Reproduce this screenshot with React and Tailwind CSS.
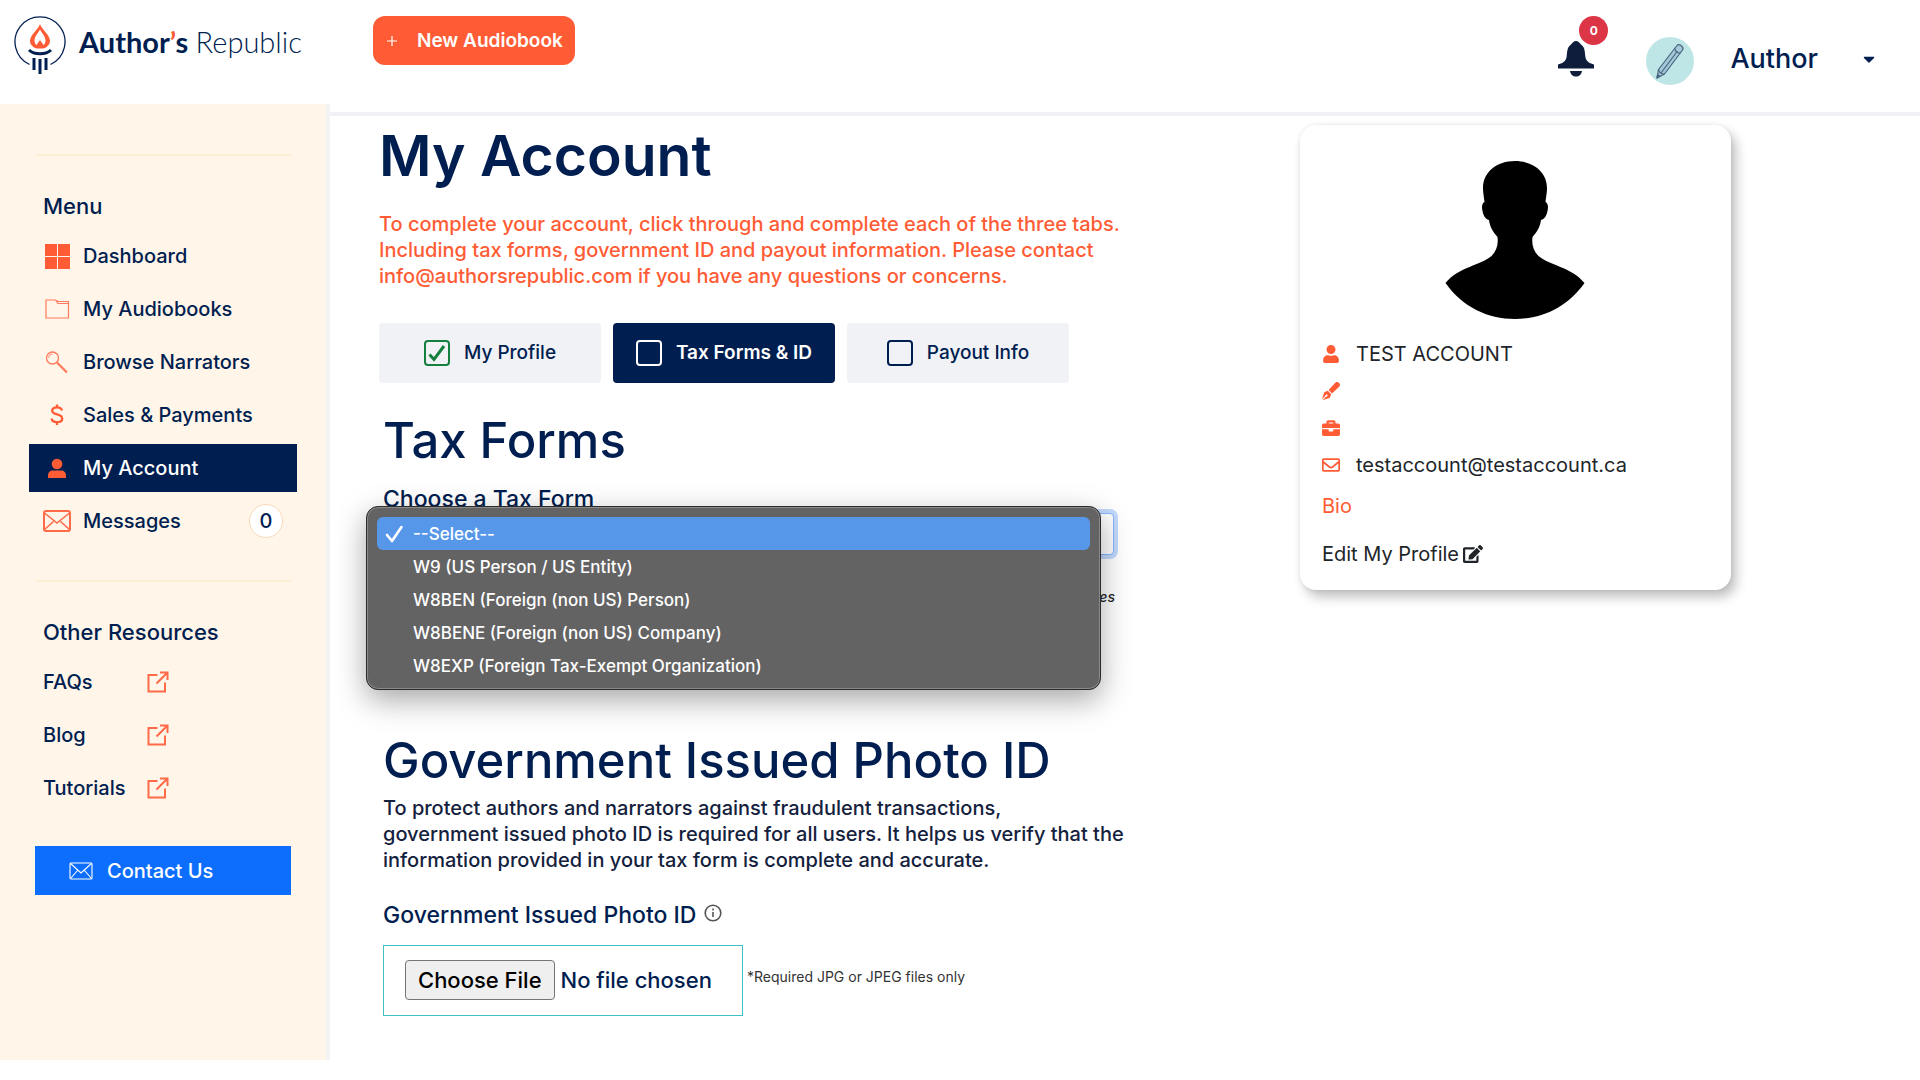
import { FaUser, FaPenFancy, FaBriefcase, FaRegEnvelope, FaEdit, FaCaretDown } from "react-icons/fa";

const menu = [
  { label: "Dashboard", icon: DashboardIcon },
  { label: "My Audiobooks", icon: FolderIcon },
  { label: "Browse Narrators", icon: SearchIcon },
  { label: "Sales & Payments", icon: DollarIcon },
  { label: "My Account", icon: PersonIcon, active: true },
  { label: "Messages", icon: MailIcon, count: 0 },
];

const resources = ["FAQs", "Blog", "Tutorials"];

const tabs = [
  { label: "My Profile", done: true },
  { label: "Tax Forms & ID", active: true },
  { label: "Payout Info" },
];

const taxForms = [
  "--Select--",
  "W9 (US Person / US Entity)",
  "W8BEN (Foreign (non US) Person)",
  "W8BENE (Foreign (non US) Company)",
  "W8EXP (Foreign Tax-Exempt Organization)",
];

function DashboardIcon() {
  return (
    <svg width="28" height="28" viewBox="0 0 28 28" fill="#ff5c35">
      <path d="M2 2h12v12H2zM15 2h12v12H15zM2 15h12v12H2zM15 15h12v12H15z" />
    </svg>
  );
}

function FolderIcon() {
  return (
    <svg width="28" height="28" viewBox="0 0 28 28" fill="none" stroke="#ff7a5c" strokeWidth="1.200">
      <path d="M3 5h9.500l2.500 1.500h10.500V23H3zM12.500 5l2.500 3.500h10.500" />
    </svg>
  );
}

function SearchIcon() {
  return (
    <svg width="28" height="28" viewBox="0 0 28 28" fill="none" stroke="#ff7a5c" strokeWidth="1.300">
      <circle cx="9.500" cy="10" r="6" />
      <path d="M5.500 10a4 4 0 0 1 4-4" strokeWidth="0.800" />
      <path d="M14 14.500l10 10" strokeWidth="2.200" />
    </svg>
  );
}

function DollarIcon() {
  return (
    <svg width="28" height="28" viewBox="0 0 28 28" fill="none" stroke="#ff5c35" strokeWidth="2.300">
      <path d="M19 9.500c-.5-2-2.200-3.200-5-3.200-3 0-4.800 1.300-4.800 3.500 0 5 10 2.300 10 7.700 0 2.300-2 3.700-5.200 3.700-3 0-5-1.300-5.400-3.700M14 3.500v3M14 21v3" />
    </svg>
  );
}

function PersonIcon() {
  return (
    <svg width="28" height="28" viewBox="0 0 28 28" fill="#ff5c35">
      <circle cx="14" cy="10" r="5.300" />
      <path d="M5 24v-2.500c0-3 2-5 5-5h8c3 0 5 2 5 5V24z" />
    </svg>
  );
}

function MailIcon() {
  return (
    <svg width="28" height="28" viewBox="0 0 28 28" fill="none" stroke="#ff6b48" strokeWidth="2">
      <rect x="1" y="4" width="26" height="20" rx="2" />
      <path d="M1.500 6L14 16 26.500 6M1.500 22.500l9-8M26.500 22.500l-9-8" strokeWidth="1.600" />
    </svg>
  );
}

function ExternalIcon() {
  return (
    <svg width="22" height="22" viewBox="0 0 22 22" fill="none" stroke="#ff6b48" strokeWidth="2">
      <path d="M10.500 4H1.500v16.500h16.500V11.500M9.500 12.500L20 2M13 1.500h7.500V9" />
    </svg>
  );
}

function Logo() {
  return (
    <svg width="52" height="60" viewBox="0 0 52 60" fill="none">
      <path d="M15.500 48.500a25 25 0 1 1 21 0" stroke="#001e50" strokeWidth="1.300" />
      <path
        fillRule="evenodd"
        d="M26 8c1.500 5 10 11 10 17 0 4-4 7-7 7.500h-6c-3-.5-7-3.500-7-7.500 0-6 8.500-12 10-17zM26 13.500c-1.500 3-5.500 7-5.500 11 0 2 .8 3.500 2 4.500l3.500-5 3.500 5c1.200-1 2-2.500 2-4.500 0-4-4-8-5.500-11z"
        fill="#ff5c35"
      />
      <path d="M15 34c5 5 17 5 22 0" stroke="#001e50" strokeWidth="3" />
      <path d="M20 42v12M26 43v15M32 42v12" stroke="#001e50" strokeWidth="3" />
    </svg>
  );
}

function BellIcon() {
  return (
    <svg width="38" height="38" viewBox="0 0 38 38" fill="#0f1d3d">
      <path d="M1 28.500v-4c4-1 7.500-3 8.500-7 .8-5 .2-10 4.500-13C15.500 3 16.500 1 19 1s3.500 2 5 3.500c4.300 3 3.700 8 4.500 13 1 4 4.500 6 8.500 7v4z" />
      <path d="M13 31h12c-.8 4-3 5.500-6 5.500S13.800 35 13 31z" />
    </svg>
  );
}

function PencilAvatar() {
  return (
    <svg width="48" height="48" viewBox="0 0 48 48" fill="none">
      <circle cx="24" cy="24" r="24" fill="#bfe6e6" />
      <g stroke="#4a6480" strokeWidth="1.200" strokeLinejoin="round">
        <path d="M11 41l1.500-8.500L31 8.500c2-2.500 7.500 1.500 5.500 4.500L18.500 37z" fill="#a3c9d8" />
        <path d="M29 11.500c0 3 3 5 5.500 4.500M12.500 32.500c.5 3 3 5 6 4.500M31.500 14L15 36" />
        <path d="M11 41l.6-3.500 2.200 1.700z" fill="#2f4a6b" />
      </g>
    </svg>
  );
}

function Silhouette() {
  return (
    <svg width="140" height="158" viewBox="0 0 140 158" fill="#000" className="mx-auto">
      <path d="M70 0c18 0 32 11 32 27 0 5-1 9-1.500 14 2.500 1 3 5 2 9-.8 4-2.500 8-6.500 9-1 7-4 12-8.500 17-1 8 1 14 6 19 10 9 33 11 46 27-17 24-42 36-69.500 36S17.500 146 .5 122c13-16 36-18 46-27 5-5 7-11 6-19-4.500-5-7.500-10-8.500-17-4-1-5.700-5-6.500-9-1-4-.5-8 2-9C39 36 38 32 38 27 38 11 52 0 70 0z" />
    </svg>
  );
}

function Sidebar() {
  return (
    <aside className="w-[330px] shrink-0 flex flex-col">
      <a href="#" className="flex items-start gap-[13px] h-[104px] pt-4 pl-[14px]">
        <Logo />
        <span className="font-['Lato'] text-[29px] leading-[52px] text-[#001e50] whitespace-nowrap">
          <b className="font-bold">
            Author<span className="text-[#ff5c35]">’</span>s
          </b>{" "}
          <span className="font-light">Republic</span>
        </span>
      </a>

      <nav className="flex-1 bg-[#fff5e9] border-r-4 border-[#f3f3f5] px-[29px] pt-[50px]">
        <hr className="mx-[6px] border-t-2 border-[#fdeed6]" />
        <h2 className="mt-9 mb-3 ml-[14px] text-[22px] leading-7">Menu</h2>
        <ul className="flex flex-col gap-[5px]">
          {menu.map((item) => (
            <li key={item.label}>
              <a
                href="#"
                className={`flex items-center h-12 pl-[14px] text-xl ${
                  item.active ? "bg-[#001e50] text-white" : ""
                }`}
              >
                <item.icon />
                <span className="ml-3">{item.label}</span>
                {item.count !== undefined && (
                  <span className="ml-auto mr-[14px] size-[34px] rounded-full bg-white border border-[#fbd9b8] flex items-center justify-center">
                    {item.count}
                  </span>
                )}
              </a>
            </li>
          ))}
        </ul>

        <hr className="mx-[6px] mt-[35px] border-t-2 border-[#fdeed6]" />
        <h2 className="mt-9 mb-3 ml-[14px] text-[22px] leading-7">Other Resources</h2>
        <ul className="flex flex-col gap-[5px]">
          {resources.map((label) => (
            <li key={label}>
              <a href="#" className="flex items-center h-12 pl-[14px] text-xl">
                <span className="w-[104px]">{label}</span>
                <ExternalIcon />
              </a>
            </li>
          ))}
        </ul>

        <button className="flex items-center gap-[14px] w-[256px] h-[49px] mt-[34px] mx-[6px] pl-[34px] bg-[#0d6efd] text-white text-xl">
          <svg width="24" height="18" viewBox="0 0 24 18" fill="none" stroke="#fff" strokeWidth="1.100">
            <rect x="1" y="1" width="22" height="16" rx="1" />
            <path d="M1.500 1.500L12 11 22.500 1.500M1.500 16.500l7-8M22.500 16.500l-7-8" />
          </svg>
          Contact Us
        </button>
      </nav>
    </aside>
  );
}

function TopBar() {
  return (
    <header className="flex items-start justify-between h-[116px] border-b-4 border-[#f1f2f6] pl-[43px] pr-[42px]">
      <button className="mt-4 flex items-center h-[49px] w-[202px] rounded-xl bg-[#ff5c35] text-white text-[19px] leading-7 font-semibold whitespace-nowrap">
        <svg width="10" height="10" viewBox="0 0 10 10" stroke="#fff" strokeWidth="1.200" className="ml-[14px] mr-5">
          <path d="M5 0v10M0 5h10" />
        </svg>
        New Audiobook
      </button>

      <div className="flex items-center h-[48px] mt-[37px]">
        <button aria-label="Notifications" className="relative mb-1">
          <BellIcon />
          <span className="absolute -top-6 left-[22px] size-[29px] rounded-full bg-[#dc3545] text-white text-xs font-bold flex items-center justify-center">
            0
          </span>
        </button>
        <span className="ml-[51px]">
          <PencilAvatar />
        </span>
        <button className="ml-9 mb-1 flex items-center gap-[42px] text-[27px] leading-9">
          Author
          <FaCaretDown size={18} />
        </button>
      </div>
    </header>
  );
}

function Tabs() {
  return (
    <div className="flex gap-3 mt-[34px]">
      {tabs.map((tab) => (
        <button
          key={tab.label}
          className={`flex items-center justify-center gap-[14px] w-[222px] h-[60px] rounded text-[19px] leading-7 whitespace-nowrap ${
            tab.active ? "bg-[#001e50] text-white font-semibold" : "bg-[#f1f2f6]"
          }`}
        >
          <svg
            width="26"
            height="26"
            viewBox="0 0 26 26"
            fill="none"
            stroke={tab.done ? "#15803d" : "currentColor"}
            strokeWidth="2"
          >
            <rect x="1" y="1" width="24" height="24" rx="3" />
            {tab.done && <path d="M5.500 14.500l4.500 5L20 6" strokeWidth="3" />}
          </svg>
          {tab.label}
        </button>
      ))}
    </div>
  );
}

function TaxFormSelect() {
  return (
    <div className="relative">
      <label htmlFor="tax-form" className="block mt-[18px] text-[23px] leading-7">
        Choose a Tax Form
      </label>
      <select
        id="tax-form"
        className="block w-[731px] h-[42px] rounded bg-white border border-[#86b7fe] ring-4 ring-[#c2d9fd] appearance-none px-3 text-lg"
      >
        {taxForms.map((form) => (
          <option key={form}>{form}</option>
        ))}
      </select>
      <p className="w-[732px] mt-8 text-right text-sm leading-5 italic text-[#212529]">es</p>

      {/* Open option list */}
      <ul
        role="listbox"
        aria-label="Tax forms"
        className="absolute -left-[17px] top-[21px] w-[735px] h-[184px] p-[10px] rounded-xl bg-[#636363] border border-[#2b2b2b] inset-ring inset-ring-[#8a8a8a] shadow-[0_10px_30px_rgba(0,0,0,0.35)] text-white text-[17px] leading-6"
      >
        {taxForms.map((form, i) => (
          <li
            key={form}
            role="option"
            aria-selected={i === 0}
            className={`flex items-center h-[33px] rounded-md ${i === 0 ? "bg-[#5797ea]" : ""}`}
          >
            <span className="w-[36px] pl-2">
              {i === 0 && (
                <svg width="19" height="18" viewBox="0 0 19 18" fill="none" stroke="#fff" strokeWidth="2.600" strokeLinecap="round" strokeLinejoin="round">
                  <path d="M2 10l5 6L16.500 2" />
                </svg>
              )}
            </span>
            {form}
          </li>
        ))}
      </ul>
    </div>
  );
}

function ProfileCard() {
  const rows = [
    { icon: FaUser, text: "TEST ACCOUNT" },
    { icon: FaPenFancy },
    { icon: FaBriefcase },
    { icon: FaRegEnvelope, text: "testaccount@testaccount.ca" },
  ];
  return (
    <section className="w-[431px] h-[465px] shrink-0 mt-[9px] pt-9 pl-[22px] pr-6 rounded-2xl bg-white text-[#212529] text-xl font-normal shadow-[5px_7px_12px_rgba(0,0,0,0.25),0_0_4px_rgba(0,0,0,0.08)]">
      <Silhouette />
      <ul className="mt-4">
        {rows.map((row, i) => (
          <li key={i} className="flex items-center h-[37px]">
            <span className="w-[34px] text-[#ff5c35]">
              <row.icon size={18} />
            </span>
            {row.text}
          </li>
        ))}
      </ul>
      <p className="mt-[9px] leading-7 text-[#ff5c35]">Bio</p>
      <a href="#" className="mt-5 flex items-center gap-1 leading-7">
        Edit My Profile <FaEdit size={20} />
      </a>
    </section>
  );
}

export default function App() {
  return (
    <div className="min-h-screen flex bg-white pb-5 font-['Inter',sans-serif] font-medium text-[#001e50]">
      <Sidebar />
      <div className="flex-1 min-w-0">
        <TopBar />
        <div className="flex justify-between pl-[49px] pr-[189px]">
          <main className="w-[744px]">
            <h1 className="mt-2 text-[57px] leading-[64px] font-semibold">My Account</h1>
            <p className="mt-[23px] text-xl leading-[26px] text-[#ff5c35]">
              To complete your account, click through and complete each of the three tabs.
              Including tax forms, government ID and payout information. Please contact
              info@authorsrepublic.com if you have any questions or concerns.
            </p>
            <Tabs />

            <div className="pl-1">
              <h2 className="mt-8 text-[49px] leading-[52px]">Tax Forms</h2>
              <TaxFormSelect />

              <h2 className="mt-[128px] text-[49px] leading-[52px] whitespace-nowrap">
                Government Issued Photo ID
              </h2>
              <p className="mt-2 text-xl leading-[26px] text-[#14213d] whitespace-nowrap">
                To protect authors and narrators against fraudulent transactions,
                <br />
                government issued photo ID is required for all users. It helps us verify that the
                <br />
                information provided in your tax form is complete and accurate.
              </p>

              <label htmlFor="photo-id" className="mt-7 flex items-center gap-2 text-[23px] leading-7">
                Government Issued Photo ID
                <svg width="18" height="18" viewBox="0 0 18 18" fill="none" stroke="#555" strokeWidth="1.600" className="mb-1">
                  <circle cx="9" cy="9" r="7.800" />
                  <path d="M9 8v5M9 4.500v2" />
                </svg>
              </label>
              <div className="mt-4 flex items-center gap-1">
                <input
                  id="photo-id"
                  type="file"
                  className="w-[360px] h-[71px] border border-[#3fc1c9] px-[21px] py-[14px] text-[22px] file:mr-[6px] file:h-10 file:px-3 file:rounded file:border file:border-solid file:border-[#767676] file:bg-[#efefef] file:text-black file:font-medium"
                />
                <small className="mb-2 text-sm text-[#333] font-normal">*Required JPG or JPEG files only</small>
              </div>
            </div>
          </main>
          <ProfileCard />
        </div>
      </div>
    </div>
  );
}
